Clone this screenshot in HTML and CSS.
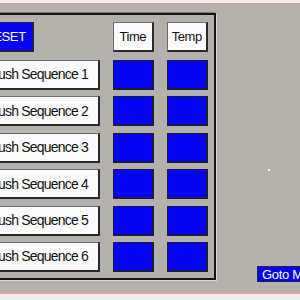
FILE: index.html
```html
<!DOCTYPE html>
<html lang="en">
<head>
    <meta charset="UTF-8">
    <meta name="viewport" content="width=device-width, initial-scale=1.0">
    <title>Flush Sequences</title>
    <link rel="stylesheet" href="styles.css">
</head>
<body>
    <div class="top-strip"></div>

    <div class="main">
        <!-- Sequence panel -->
        <div class="panel">
            <div class="grid">
                <button class="reset">RESET</button>
                <div class="head">Time</div>
                <div class="head">Temp</div>

                <button class="seq">Flush Sequence 1</button>
                <div class="cell"></div>
                <div class="cell"></div>

                <button class="seq">Flush Sequence 2</button>
                <div class="cell"></div>
                <div class="cell"></div>

                <button class="seq">Flush Sequence 3</button>
                <div class="cell"></div>
                <div class="cell"></div>

                <button class="seq">Flush Sequence 4</button>
                <div class="cell"></div>
                <div class="cell"></div>

                <button class="seq">Flush Sequence 5</button>
                <div class="cell"></div>
                <div class="cell"></div>

                <button class="seq">Flush Sequence 6</button>
                <div class="cell"></div>
                <div class="cell"></div>
            </div>
        </div>

        <!-- Right side -->
        <div class="side">
            <span class="dot"></span>
            <button class="goto">Goto Main</button>
        </div>
    </div>

    <div class="bottom-strip"></div>
</body>
</html>
```

FILE: styles.css
```css
body {
    margin: 0;
    width: 300px;
    height: 300px;
    overflow: hidden;
    background-color: #b3b1aa;
    font-family: "Liberation Sans", Arial, sans-serif;
    color: #111;
}

.top-strip {
    height: 3px;
    background-color: #f3ecec;
    border-bottom: 1px solid #cf9a9c;
}

.main {
    display: flex;
    height: 288px;
}

/* panel */
.panel {
    flex: none;
    margin-top: 9px;
    margin-left: -33px;
    align-self: flex-start;
    padding: 7px 6px 6px 8px;
    border: 2px solid #151515;
    box-shadow: -1px -1px 0 #7d7b76, 1px 1px 0 #d8d6d0;
}

.grid {
    display: grid;
    grid-template-columns: 123px 41.5px 41.5px;
    grid-template-rows: 31.6px repeat(6, 30px);
    column-gap: 12.5px;
    row-gap: 6.4px;
}

button {
    font-family: inherit;
    margin: 0;
    padding: 0;
    cursor: pointer;
}

.reset {
    width: 57px;
    height: 30px;
    background-color: #0505f2;
    color: #fff;
    font-size: 13px;
    letter-spacing: -0.4px;
    border: 1px solid #20204a;
    border-right-width: 2px;
    border-bottom-width: 2px;
}

.head {
    height: 30px;
    box-sizing: border-box;
    display: flex;
    align-items: center;
    justify-content: center;
    background-color: #fbfbfb;
    font-size: 13px;
    letter-spacing: -0.5px;
    border: 1px solid #6d6d6d;
    border-right: 2px solid #2a2a2a;
    border-bottom: 2px solid #2a2a2a;
}

.seq {
    height: 30px;
    background-color: #fbfbfb;
    color: #111;
    font-size: 14px;
    letter-spacing: -0.8px;
    border: 1px solid #6d6d6d;
    border-right: 2px solid #2a2a2a;
    border-bottom: 2px solid #2a2a2a;
}

.cell {
    background-color: #0505f2;
    border: 1px solid #1a1a40;
    border-right-width: 2px;
    border-bottom-width: 2px;
}

/* right side */
.side {
    position: relative;
    flex: 1;
    display: flex;
    flex-direction: column;
    justify-content: flex-end;
    padding-bottom: 10px;
}

.dot {
    position: absolute;
    left: 52px;
    top: 165px;
    width: 2px;
    height: 2px;
    background-color: #f4f4f4;
}

.goto {
    margin-left: 41px;
    width: 70px;
    height: 16px;
    text-align: left;
    padding-left: 4px;
    background-color: #0505f2;
    color: #fff;
    font-size: 13px;
    letter-spacing: -0.3px;
    border: 1px solid #20204a;
}

.bottom-strip {
    height: 6px;
    background-color: #f3ecec;
    border-top: 2px solid #dca2a8;
}
```
